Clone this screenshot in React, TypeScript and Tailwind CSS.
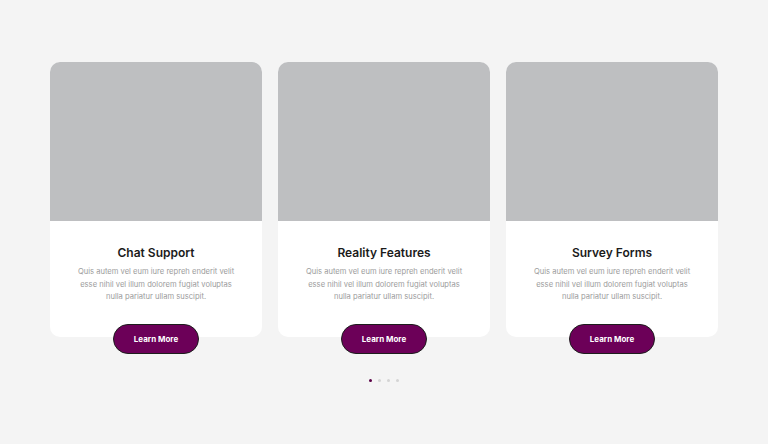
const cards = [
  { title: "Chat Support" },
  { title: "Reality Features" },
  { title: "Survey Forms" },
];

const body =
  "Quis autem vel eum iure repreh enderit velit esse nihil vel illum dolorem fugiat voluptas nulla pariatur ullam suscipit.";

export default function App() {
  return (
    <div
      className="w-[768px] h-[444px] bg-[#f4f4f4] flex flex-col items-center pt-[62px]"
      style={{ fontFamily: "Inter, 'Noto Sans', sans-serif" }}
    >
      <div className="flex gap-4">
        {cards.map((c, i) => (
          <div key={i} className="relative w-[212px] bg-white rounded-[10px]">
            <div className="h-[159px] bg-[#bebfc1] rounded-t-[10px]" />
            <div className="flex flex-col items-center text-center pt-[23px] pb-[33px] px-[24px]">
              <h3 className="text-[12px] leading-[17px] font-semibold text-[#1b1b1b]">{c.title}</h3>
              <p className="mt-[5px] text-[7.6px] leading-[12.5px] text-[#9c9c9c]">{body}</p>
            </div>
            <button className="absolute left-1/2 -translate-x-1/2 bottom-[-17px] w-[86px] h-[30px] rounded-full bg-[#6c0058] border border-[#1d1d1d] text-white text-[8px] font-bold">
              Learn More
            </button>
          </div>
        ))}
      </div>
      <div className="flex gap-[6px] mt-[42px]">
        <span className="w-[3px] h-[3px] rounded-full bg-[#5a0046]" />
        <span className="w-[3px] h-[3px] rounded-full bg-[#d4d4d4]" />
        <span className="w-[3px] h-[3px] rounded-full bg-[#d4d4d4]" />
        <span className="w-[3px] h-[3px] rounded-full bg-[#d4d4d4]" />
      </div>
    </div>
  );
}
